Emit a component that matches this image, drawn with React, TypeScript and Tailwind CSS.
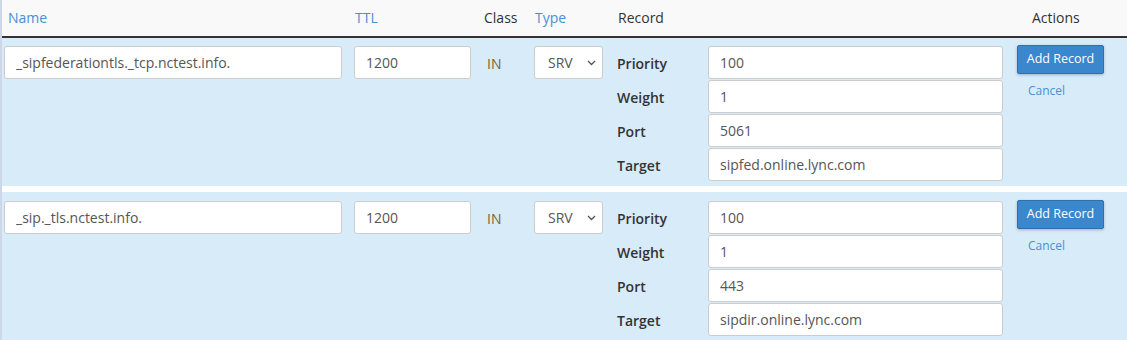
import React from "react";

type Rec = {
  name: string;
  ttl: string;
  priority: string;
  weight: string;
  port: string;
  target: string;
};

const records: Rec[] = [
  {
    name: "_sipfederationtls._tcp.nctest.info.",
    ttl: "1200",
    priority: "100",
    weight: "1",
    port: "5061",
    target: "sipfed.online.lync.com",
  },
  {
    name: "_sip._tls.nctest.info.",
    ttl: "1200",
    priority: "100",
    weight: "1",
    port: "443",
    target: "sipdir.online.lync.com",
  },
];

const inputCls =
  "h-[33px] bg-white border border-[#cccccc] rounded-[3px] px-[11px] text-[14px] text-[#555] outline-none";

const Chevron = () => (
  <svg width="9" height="6" viewBox="0 0 9 6" className="ml-auto">
    <path d="M1 1l3.5 3.5L8 1" fill="none" stroke="#555" strokeWidth="1.3" />
  </svg>
);

const RecordRow = ({ rec, first }: { rec: Rec; first: boolean }) => {
  const fields: [string, string][] = [
    ["Priority", rec.priority],
    ["Weight", rec.weight],
    ["Port", rec.port],
    ["Target", rec.target],
  ];
  return (
    <div
      className={`grid grid-cols-[348px_130px_50px_80px_400px_1fr] bg-[#d8ebf8] ${
        first ? "pt-[8px] pb-[5px]" : "pt-[9px] pb-[6px]"
      }`}
    >
      {/* Name */}
      <div className="pl-[2px]">
        <input readOnly value={rec.name} className={`${inputCls} w-[338px]`} />
      </div>

      {/* TTL */}
      <div className="pl-[4px]">
        <input readOnly value={rec.ttl} className={`${inputCls} w-[117px]`} />
      </div>

      {/* Class */}
      <div className="pl-[7px] h-[34px] flex items-center text-[14px] text-[#7a6631]">IN</div>

      {/* Type */}
      <div className="pl-[4px]">
        <div className="h-[33px] w-[69px] bg-white border border-[#cccccc] rounded-[3px] flex items-center pl-[13px] pr-[6px] text-[14px] text-[#555]">
          SRV
          <Chevron />
        </div>
      </div>

      {/* Record */}
      <div className="flex flex-col gap-[1px]">
        {fields.map(([label, value]) => (
          <div key={label} className="flex items-center">
            <div className="w-[98px] pl-[7px] pt-[1px] text-[14px] font-semibold text-[#333]">{label}</div>
            <input readOnly value={value} className={`${inputCls} w-[295px]`} />
          </div>
        ))}
      </div>

      {/* Actions */}
      <div className="pl-[7px] flex flex-col items-start">
        <button className="h-[29px] w-[87px] -mt-[1px] bg-[#3a87cd] border border-[#2f70ad] rounded-[2px] text-white text-[12.5px] shadow-[0_1px_3px_rgba(0,0,0,0.25)]">
          Add Record
        </button>
        <a className="ml-[11px] mt-[8px] text-[12px] text-[#4a8fd4]">Cancel</a>
      </div>
    </div>
  );
};

export default function App() {
  return (
    <div className="w-[1127px] h-[340px] overflow-hidden bg-white border-l-2 border-[#cdd7e8] font-['Open_Sans',sans-serif]">
      {/* Header */}
      <div className="grid grid-cols-[348px_130px_50px_80px_400px_1fr] h-[38px] items-center bg-[#f9f9f9] border-b-2 border-[#333] text-[14px] pb-[2px]">
        <div className="pl-[6px] text-[#4a8fd4]">Name</div>
        <div className="pl-[5px] text-[#4a8fd4]">TTL</div>
        <div className="pl-[4px] text-[#333]">Class</div>
        <div className="pl-[5px] text-[#4a8fd4]">Type</div>
        <div className="pl-[8px] text-[#333]">Record</div>
        <div className="pl-[22px] text-[#333]">Actions</div>
      </div>

      <RecordRow rec={records[0]} first />
      <div className="h-[6px]" />
      <RecordRow rec={records[1]} first={false} />
    </div>
  );
}
